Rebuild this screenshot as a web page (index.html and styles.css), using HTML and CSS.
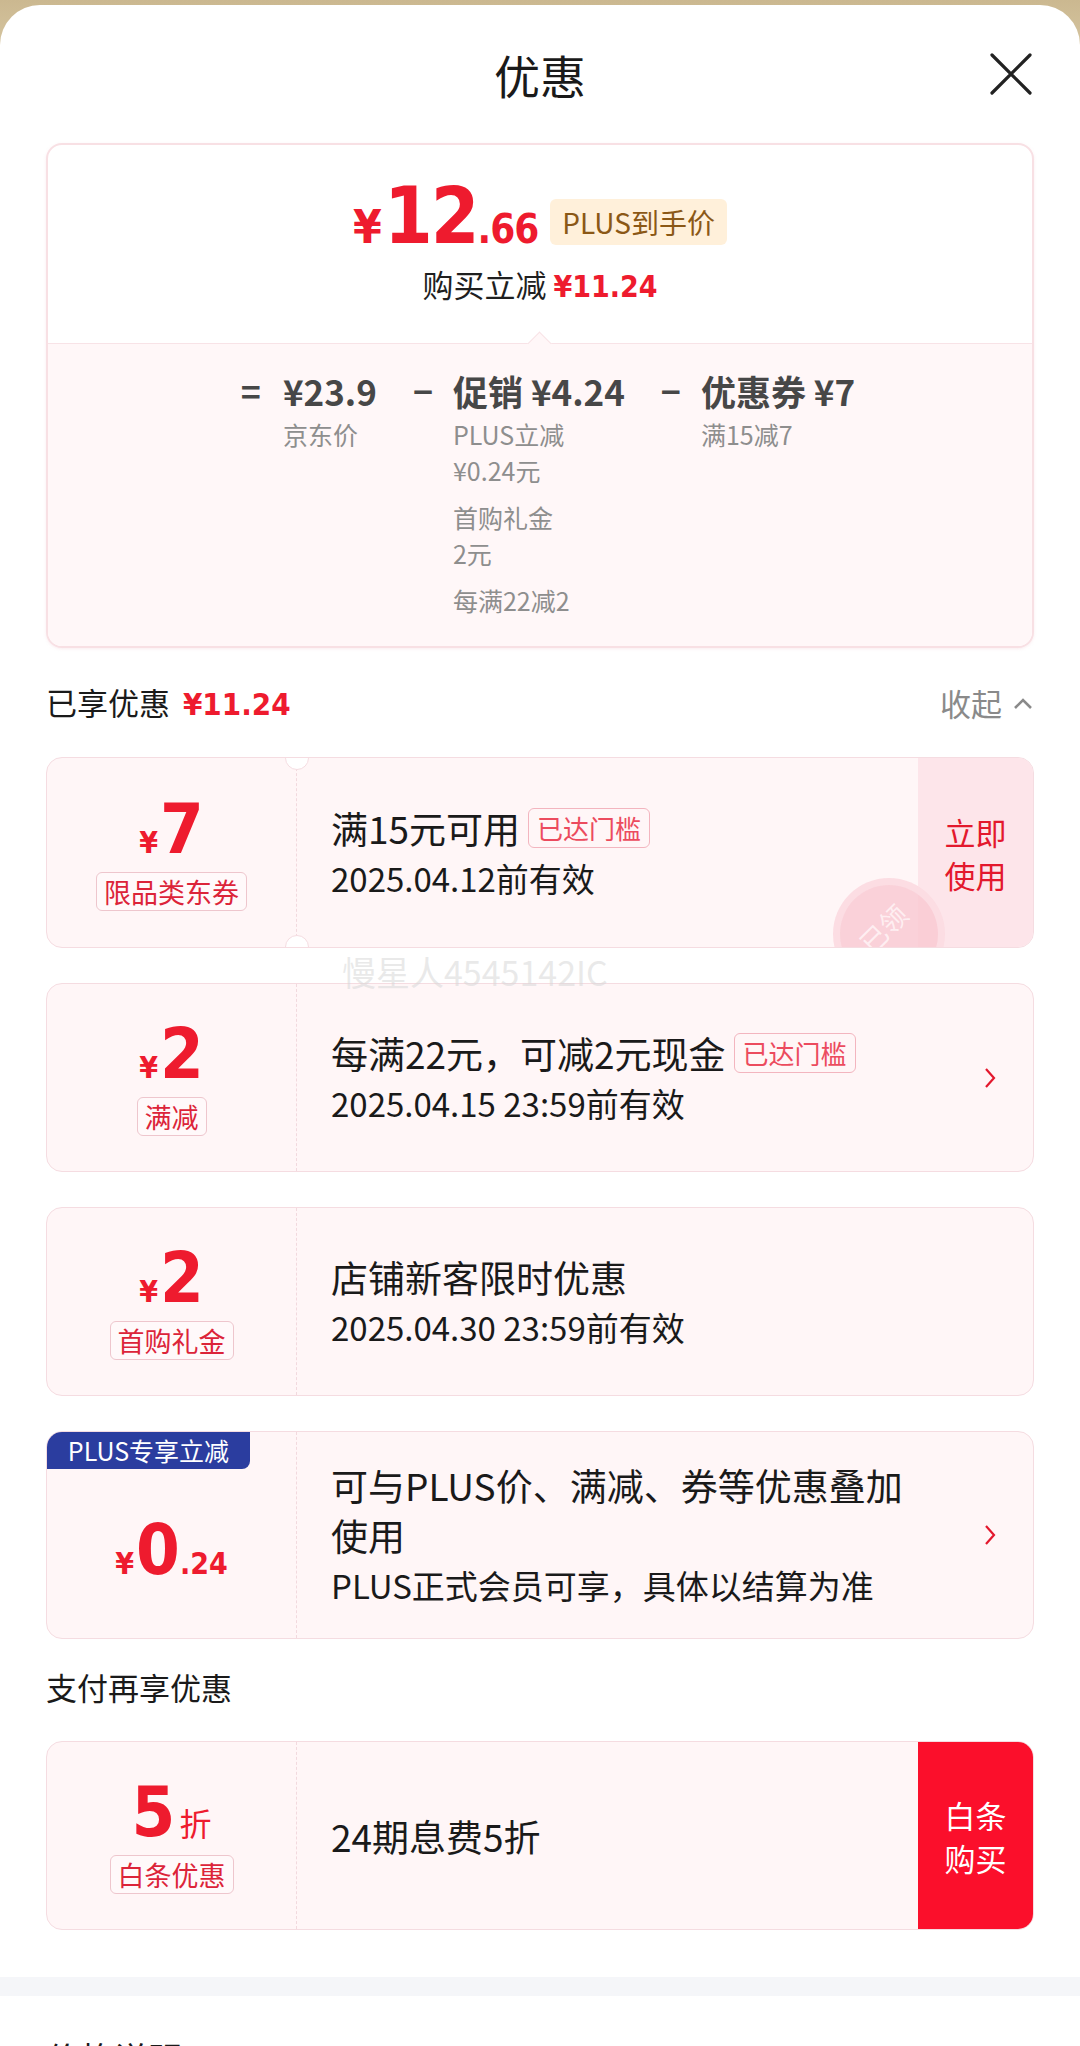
FILE: index.html
```html
<!DOCTYPE html>
<html lang="zh-CN">
<head>
<meta charset="utf-8">
<title>优惠</title>
<link rel="stylesheet" href="styles.css">
</head>
<body>
<div class="sheet">
  <header class="sheet-head">
    <h1 class="sheet-title">优惠</h1>
    <button class="close" aria-label="关闭">
      <svg width="44" height="44" viewBox="0 0 44 44"><path d="M3 3 L41 41 M41 3 L3 41" stroke="#222" stroke-width="3.2" fill="none" stroke-linecap="round"/></svg>
    </button>
  </header>

  <div class="sheet-body">
    <section class="summary">
      <div class="summary-top">
        <div class="final">
          <span class="final-price num"><span class="fp-yen">¥</span>12<span class="fp-dec">.66</span></span>
          <span class="plus-tag">PLUS到手价</span>
        </div>
        <div class="save">购买立减 <span class="save-amt num">¥11.24</span></div>
      </div>
      <div class="summary-calc">
        <div class="op op-first">=</div>
        <div class="term">
          <div class="term-main">¥23.9</div>
          <div class="term-sub">京东价</div>
        </div>
        <div class="op">−</div>
        <div class="term">
          <div class="term-main">促销 ¥4.24</div>
          <ul class="term-list">
            <li>PLUS立减<br>¥0.24元</li>
            <li>首购礼金<br>2元</li>
            <li>每满22减2</li>
          </ul>
        </div>
        <div class="op">−</div>
        <div class="term">
          <div class="term-main">优惠券 ¥7</div>
          <div class="term-sub">满15减7</div>
        </div>
      </div>
    </section>

    <div class="sec-row">
      <div class="sec-title">已享优惠 <span class="sec-amt num">¥11.24</span></div>
      <div class="collapse">收起
        <svg width="22" height="16" viewBox="0 0 22 16"><polyline points="3,13 11,5 19,13" stroke="#8a8a8a" stroke-width="2.6" fill="none"/></svg>
      </div>
    </div>

    <div class="coupon-list">
      <div class="coupon coupon-notched">
        <div class="coupon-left">
          <div class="amount"><span class="cur num">¥</span><span class="val num">7</span></div>
          <span class="kind">限品类东券</span>
        </div>
        <div class="coupon-body">
          <div class="c-title">满15元可用<span class="reached">已达门槛</span></div>
          <div class="c-date">2025.04.12前有效</div>
        </div>
        <div class="coupon-action">立即<br>使用</div>
        <div class="stamp"><span>已领</span></div>
      </div>

      <div class="coupon">
        <div class="coupon-left">
          <div class="amount"><span class="cur num">¥</span><span class="val num">2</span></div>
          <span class="kind">满减</span>
        </div>
        <div class="coupon-body">
          <div class="c-title">每满22元，可减2元现金<span class="reached">已达门槛</span></div>
          <div class="c-date">2025.04.15 23:59前有效</div>
        </div>
        <div class="coupon-arrow"><svg width="14" height="24" viewBox="0 0 14 24"><polyline points="3,3 11,12 3,21" stroke="#e3182d" stroke-width="2.2" fill="none"/></svg></div>
      </div>

      <div class="coupon">
        <div class="coupon-left">
          <div class="amount"><span class="cur num">¥</span><span class="val num">2</span></div>
          <span class="kind">首购礼金</span>
        </div>
        <div class="coupon-body">
          <div class="c-title">店铺新客限时优惠</div>
          <div class="c-date">2025.04.30 23:59前有效</div>
        </div>
      </div>

      <div class="coupon coupon-plus">
        <span class="plus-badge">PLUS专享立减</span>
        <div class="coupon-left coupon-left-plus">
          <div class="amount"><span class="cur num">¥</span><span class="val num">0</span><span class="dec num">.24</span></div>
        </div>
        <div class="coupon-body">
          <div class="c-title">可与PLUS价、满减、券等优惠叠加<br>使用</div>
          <div class="c-date">PLUS正式会员可享，具体以结算为准</div>
        </div>
        <div class="coupon-arrow"><svg width="14" height="24" viewBox="0 0 14 24"><polyline points="3,3 11,12 3,21" stroke="#e3182d" stroke-width="2.2" fill="none"/></svg></div>
      </div>
    </div>

    <div class="sec-row sec-row-pay">
      <div class="sec-title">支付再享优惠</div>
    </div>

    <div class="coupon">
      <div class="coupon-left">
        <div class="amount"><span class="val num">5</span><span class="zhe">折</span></div>
        <span class="kind">白条优惠</span>
      </div>
      <div class="coupon-body">
        <div class="c-title">24期息费5折</div>
      </div>
      <div class="coupon-action coupon-action-solid">白条<br>购买</div>
    </div>
  </div>

  <div class="band"></div>
  <div class="next-title">价格说明</div>
</div>
<div class="watermark">慢星人4545142IC</div>
</body>
</html>
```
FILE: styles.css
```css
* { box-sizing: border-box; }
html, body { margin: 0; padding: 0; }
body {
  width: 1080px;
  height: 2046px;
  overflow: hidden;
  position: relative;
  background: linear-gradient(#cbb890 0, #d8c8a4 60px, #ffffff 61px);
  font-family: "Noto Sans CJK SC", "Noto Sans", sans-serif;
  color: #1a1a1a;
}
.num {
  font-family: "DejaVu Sans Condensed", "Liberation Sans Narrow", "Roboto", sans-serif;
  font-stretch: condensed;
  font-weight: 700;
}
.sheet {
  margin-top: 5px;
  background: #fff;
  border-radius: 40px 40px 0 0;
  min-height: 2041px;
}
.sheet-head {
  height: 138px;
  display: flex;
  align-items: center;
  justify-content: center;
  position: relative;
}
.sheet-title {
  margin: 0;
  font-size: 46px;
  font-weight: 400;
  line-height: 60px;
  color: #1a1a1a;
}
.close {
  position: absolute;
  right: 47px;
  top: 47px;
  width: 44px;
  height: 44px;
  padding: 0;
  border: 0;
  background: none;
}
.sheet-body { padding: 0 46px; }

/* summary card */
.summary {
  border: 2px solid #f8e0e4;
  border-radius: 16px;
  background: #fff;
  box-shadow: 0 1px 3px rgba(240, 200, 208, 0.35);
}
.summary-top {
  height: 198px;
  padding-top: 45px;
  display: flex;
  flex-direction: column;
  align-items: center;
}
.final {
  display: flex;
  align-items: center;
  height: 64px;
}
.final-price {
  color: #ee1b2e;
  font-size: 78px;
  line-height: 64px;
  letter-spacing: -2px;
}
.fp-yen { font-size: 46px; margin-right: 4px; }
.fp-dec { font-size: 40px; letter-spacing: -1px; }
.plus-tag {
  margin-left: 12px;
  background: #fff0da;
  color: #8b5816;
  font-size: 28px;
  line-height: 46px;
  padding: 0 12px;
  border-radius: 6px;
}
.save {
  margin-top: 10px;
  font-size: 31px;
  line-height: 40px;
  color: #1f1f1f;
}
.save-amt { color: #ee1b2e; font-size: 30px; }

.summary-calc {
  position: relative;
  display: flex;
  justify-content: center;
  align-items: flex-start;
  background: #fff7f8;
  border-top: 1px solid #f8e3e7;
  border-radius: 0 0 14px 14px;
  padding: 25px 0 28px 16px;
  color: #474747;
}
.summary-calc::before {
  content: "";
  position: absolute;
  left: 483px;
  top: -9px;
  width: 16px;
  height: 16px;
  background: #fff7f8;
  border-top: 1px solid #f8e3e7;
  border-left: 1px solid #f8e3e7;
  transform: rotate(45deg);
}
.op {
  font-size: 34px;
  line-height: 44px;
  font-weight: 700;
  margin: 0 20px 0 36px;
}
.op-first { margin-left: 0; margin-right: 22px; }
.term-main {
  font-size: 35px;
  line-height: 44px;
  font-weight: 700;
  white-space: nowrap;
}
.term-sub {
  margin-top: 3px;
  font-size: 25px;
  line-height: 36px;
  color: #8e8e8e;
}
.term-list {
  list-style: none;
  margin: 3px 0 0;
  padding: 0;
  display: flex;
  flex-direction: column;
  gap: 11px;
  font-size: 25px;
  line-height: 36px;
  color: #8e8e8e;
  white-space: nowrap;
}

/* section rows */
.sec-row {
  height: 109px;
  display: flex;
  align-items: center;
  justify-content: space-between;
}
.sec-title {
  font-size: 31px;
  line-height: 40px;
  color: #1a1a1a;
}
.sec-amt { color: #ee1b2e; font-size: 31px; margin-left: 6px; }
.collapse {
  font-size: 31px;
  line-height: 40px;
  color: #8a8a8a;
  display: flex;
  align-items: center;
  gap: 10px;
}
.sec-row-pay {
  height: auto;
  padding: 28px 0 34px;
}

/* coupons */
.coupon-list {
  display: flex;
  flex-direction: column;
  gap: 35px;
}
.coupon {
  position: relative;
  display: flex;
  min-height: 189px;
  background: #fff6f7;
  border: 1.5px solid #f5dce1;
  border-radius: 16px;
  overflow: hidden;
}
.coupon-notched { min-height: 191px; }
.coupon-notched::before,
.coupon-notched::after {
  content: "";
  position: absolute;
  left: 238px;
  width: 22px;
  height: 22px;
  border-radius: 50%;
  background: #fff;
  border: 1.5px solid #f5dce1;
  z-index: 2;
}
.coupon-notched::before { top: -12px; }
.coupon-notched::after { bottom: -12px; }
.coupon-left {
  flex: 0 0 250px;
  display: flex;
  flex-direction: column;
  align-items: center;
  justify-content: center;
  border-right: 1.5px dashed #f2d9de;
  color: #ee1b2e;
}
.coupon-left-plus { padding-top: 30px; }
.amount {
  height: 70px;
  display: flex;
  align-items: baseline;
  line-height: 70px;
}
.cur { font-size: 30px; margin-right: 2px; }
.val { font-size: 70px; }
.dec { font-size: 30px; }
.zhe { font-size: 32px; margin-left: 4px; }
.kind {
  margin-top: 8px;
  font-size: 27px;
  line-height: 37px;
  padding: 0 7px;
  border: 1.5px solid #eec6cd;
  border-radius: 6px;
  color: #dc2439;
  background: #fff9fa;
}
.coupon-body {
  flex: 1;
  display: flex;
  flex-direction: column;
  justify-content: center;
  padding: 28px 0 28px 34px;
}
.c-title {
  font-size: 37px;
  line-height: 50px;
  color: #1a1a1a;
  display: flex;
  align-items: center;
  white-space: nowrap;
}
.coupon-plus .c-title { display: block; }
.c-date {
  font-size: 33px;
  line-height: 50px;
  color: #1a1a1a;
  white-space: nowrap;
}
.reached {
  margin-left: 8px;
  font-size: 26px;
  line-height: 38px;
  padding: 0 8px;
  border: 1.5px solid #f3b5bf;
  border-radius: 6px;
  color: #ec4b5e;
}
.coupon-action {
  flex: 0 0 115px;
  display: flex;
  align-items: center;
  justify-content: center;
  text-align: center;
  background: #fde5ea;
  color: #e3182d;
  font-size: 31px;
  line-height: 43px;
}
.coupon-action-solid {
  background: #fb0f2b;
  color: #fff;
}
.coupon-arrow {
  flex: 0 0 86px;
  display: flex;
  align-items: center;
  justify-content: center;
}
.plus-badge {
  position: absolute;
  left: 0;
  top: 0;
  width: 203px;
  height: 37px;
  background: #2b3d9f;
  color: #fff;
  font-size: 25px;
  line-height: 37px;
  text-align: center;
  border-radius: 0 0 8px 0;
  z-index: 2;
}
.stamp {
  position: absolute;
  left: 786px;
  top: 120px;
  width: 112px;
  height: 112px;
  border-radius: 50%;
  border: 7px solid rgba(252, 222, 228, 0.9);
  background: rgba(249, 200, 209, 0.8);
  display: flex;
  align-items: center;
  justify-content: center;
  z-index: 1;
}
.stamp span {
  transform: rotate(-45deg) translate(0, -8px);
  color: rgba(255, 240, 243, 0.95);
  font-size: 27px;
  line-height: 30px;
}

.band {
  margin-top: 47px;
  height: 19px;
  background: #f5f6f9;
}
.next-title {
  padding: 40px 46px 0;
  font-size: 34px;
  line-height: 44px;
  color: #1a1a1a;
}
.watermark {
  position: absolute;
  left: 342px;
  top: 948px;
  font-size: 34px;
  line-height: 48px;
  color: rgba(215, 215, 215, 0.55);
  pointer-events: none;
}
```
